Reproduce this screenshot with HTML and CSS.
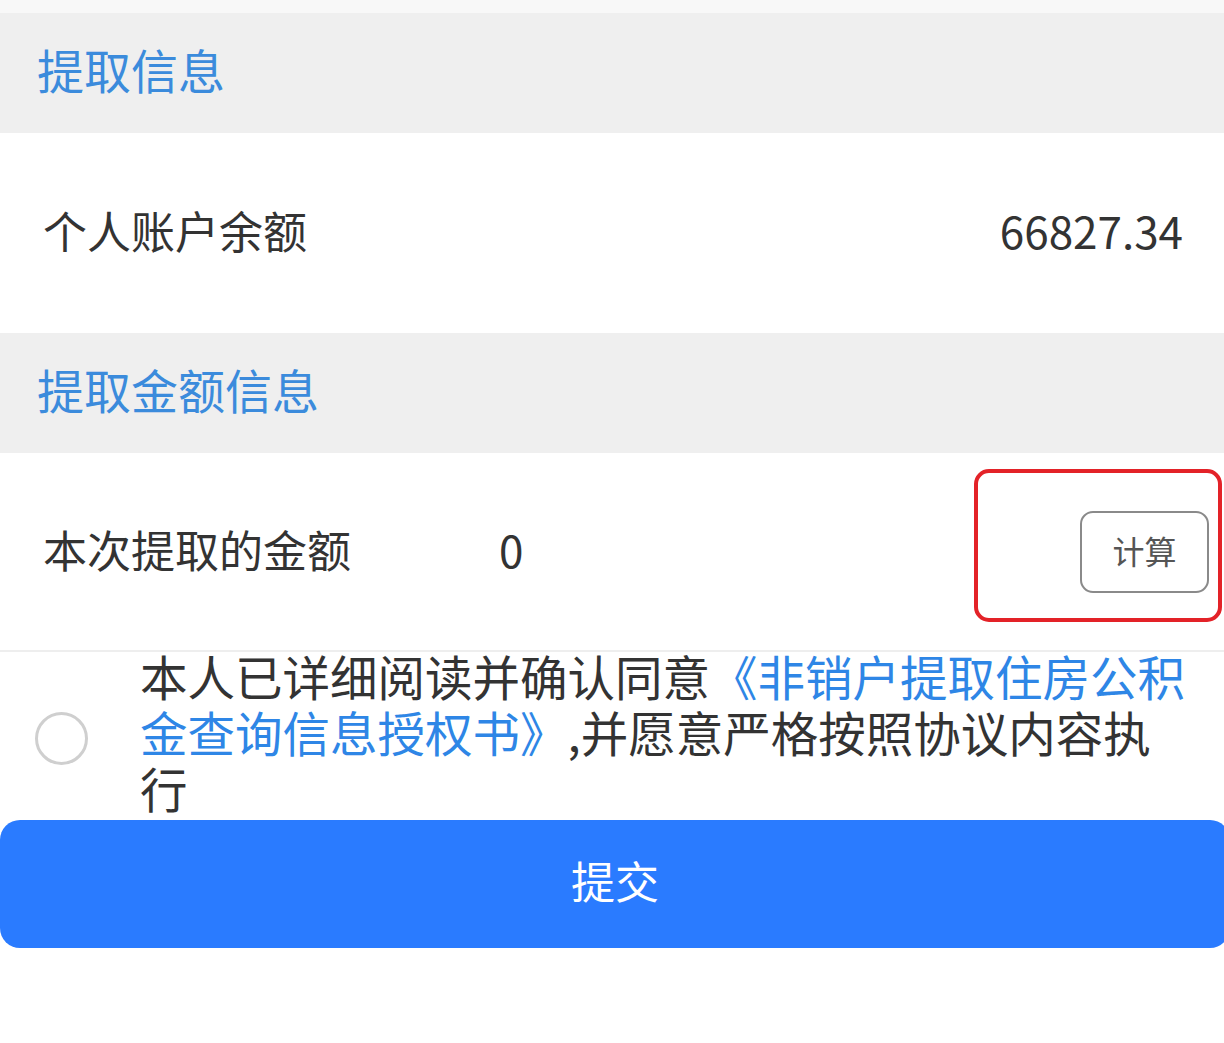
FILE: index.html
```html
<!DOCTYPE html>
<html lang="zh-CN">
<head>
    <meta charset="UTF-8">
    <meta name="viewport" content="width=device-width, initial-scale=1.0">
    <title>提取信息</title>
    <link rel="stylesheet" href="styles.css">
</head>
<body>
    <div class="top-strip"></div>

    <div class="section-title">提取信息</div>

    <div class="row">
        <span class="label">个人账户余额</span>
        <span class="value">66827.34</span>
    </div>

    <div class="section-title">提取金额信息</div>

    <div class="row row-amount">
        <span class="label">本次提取的金额</span>
        <span class="amount">0</span>
        <div class="calc-wrap">
            <button class="calc-btn">计算</button>
            <div class="mark"></div>
        </div>
    </div>

    <div class="agree">
        <span class="radio"></span>
        <p class="agree-text">本人已详细阅读并确认同意<a class="link">《非销户提取住房公积金查询信息授权书》</a>,并愿意严格按照协议内容执行</p>
    </div>

    <button class="submit">提交</button>
</body>
</html>
```

FILE: styles.css
```css
* {
    box-sizing: border-box;
}

body {
    margin: 0;
    font-family: "Noto Sans CJK SC", "Noto Sans", sans-serif;
    background: #fff;
    color: #333;
}

.top-strip {
    height: 13px;
    background: #f8f8f8;
}

.section-title {
    height: 120px;
    display: flex;
    align-items: center;
    padding: 0 0 9px 37px;
    background: #efefef;
    color: #3b8bdc;
    font-size: 47px;
}

.row {
    height: 200px;
    display: flex;
    align-items: center;
    justify-content: space-between;
    padding: 0 41px 7px 43px;
    font-size: 44px;
}

.row-amount {
    height: 199px;
    padding: 0 15px 5px 43px;
    justify-content: flex-start;
    border-bottom: 2px solid #eeeeee;
}

.amount {
    margin-left: 148px;
}

.calc-wrap {
    margin-left: auto;
    position: relative;
    display: flex;
    align-items: center;
    margin-top: 5px;
}

.calc-btn {
    width: 129px;
    height: 82px;
    border: 2px solid #8a8a8a;
    border-radius: 13px;
    background: #fff;
    color: #555;
    font-family: inherit;
    font-size: 32px;
    padding: 0 0 4px;
}

.mark {
    position: absolute;
    left: -106px;
    top: -42px;
    width: 248px;
    height: 153px;
    border: 4px solid #e32228;
    border-radius: 15px;
}

.agree {
    display: flex;
    align-items: center;
    height: 168px;
}

.radio {
    width: 53px;
    height: 53px;
    border: 3px solid #cfcfcf;
    border-radius: 50%;
    margin: 4px 0 0 35px;
    flex-shrink: 0;
}

.agree-text {
    margin: 0 0 8px 52px;
    width: 1050px;
    font-size: 47.5px;
    line-height: 56px;
    color: #333;
}

.link {
    color: #2e86e6;
}

.submit {
    display: block;
    width: 1230px;
    height: 128px;
    margin: 0;
    padding: 0 0 8px;
    border: none;
    border-radius: 20px;
    background: #2a7bff;
    color: #fff;
    font-family: inherit;
    font-size: 44px;
}
```
